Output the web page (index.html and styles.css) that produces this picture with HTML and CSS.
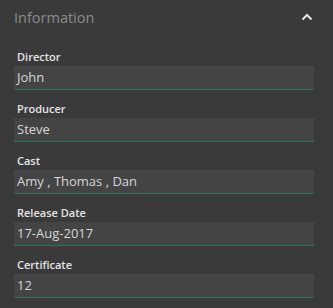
FILE: index.html
```html
<!DOCTYPE html>
<html>

<head>
  <meta charset="utf-8">
  <meta name="viewport" content="width=device-width">
  <title>Information</title>

  <link rel="stylesheet" href="styles.css">
</head>

<body>
  <div class="panel">
    <div class="panel-header">
      <span class="panel-title">Information</span>
      <svg class="chevron" width="12" height="8" viewBox="0 0 12 8">
        <polyline points="1.5,6.5 6,2 10.5,6.5" fill="none" stroke="#e6e6e6" stroke-width="2" />
      </svg>
    </div>

    <div class="field">
      <div class="field-label">Director</div>
      <div class="field-value">John</div>
    </div>
    <div class="field">
      <div class="field-label">Producer</div>
      <div class="field-value">Steve</div>
    </div>
    <div class="field">
      <div class="field-label">Cast</div>
      <div class="field-value">Amy , Thomas , Dan</div>
    </div>
    <div class="field">
      <div class="field-label">Release Date</div>
      <div class="field-value">17-Aug-2017</div>
    </div>
    <div class="field">
      <div class="field-label">Certificate</div>
      <div class="field-value">12</div>
    </div>
  </div>
</body>

</html>
```

FILE: styles.css
```css
html,
body {
  margin: 0;
  padding: 0;
  width: 100%;
  height: 100%;
  background-color: #3a3a3b;
  overflow: hidden;
}

.panel {
  font-family: "Open Sans", "DejaVu Sans", sans-serif;
  padding: 0 19px 0 14px;
}

.panel-header {
  display: flex;
  align-items: center;
  justify-content: space-between;
  height: 34px;
  margin-bottom: 15px;
  padding-right: 1px;
}

.panel-title {
  color: #8b8b8b;
  font-size: 14.5px;
}

.chevron {
  display: block;
  margin-top: -1px;
}

.field {
  margin-bottom: 11px;
}

.field-label {
  color: #e4e4e4;
  font-size: 11px;
  font-weight: 600;
  line-height: 16px;
  padding: 0 0 0 3px;
  margin-bottom: 1px;
}

.field-value {
  background-color: #444445;
  border-bottom: 1px solid #2b7363;
  color: #d6d6d6;
  font-size: 13px;
  line-height: 23px;
  height: 23px;
  padding: 0 4px 0 3px;
}
```
